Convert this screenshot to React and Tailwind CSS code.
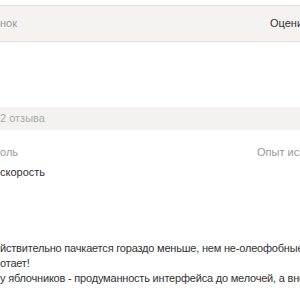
export default function App() {
  return (
    <div className="w-[300px] h-[300px] overflow-hidden bg-white text-[11px] leading-[15px] text-[#333] font-['Liberation_Sans',Arial,sans-serif]">
      <div className="mt-[5px] h-[37px] flex items-center border-t border-b border-[#e3e1de] bg-[#f4f3f1] whitespace-nowrap">
        <span className="w-[270px] shrink-0 text-[#999]">нок</span>
        <span className="shrink-0">Оценить</span>
      </div>

      <div className="mt-[65px] h-[23px] flex items-center bg-[#f3f2f0] text-[#aaa]">
        2 отзыва
      </div>

      <div className="mt-[15px] flex whitespace-nowrap text-[#999]">
        <span className="w-[257px] shrink-0">оль</span>
        <span className="shrink-0">Опыт использования</span>
      </div>
      <div className="mt-[5px]">скорость</div>

      <div className="mt-[61px] whitespace-nowrap tracking-[-0.2px]">
        <p>йствительно пачкается гораздо меньше, нем не-олеофобные экраны</p>
        <p>отает!</p>
        <p>у яблочников - продуманность интерфейса до мелочей, а внешний вид</p>
      </div>
    </div>
  );
}
